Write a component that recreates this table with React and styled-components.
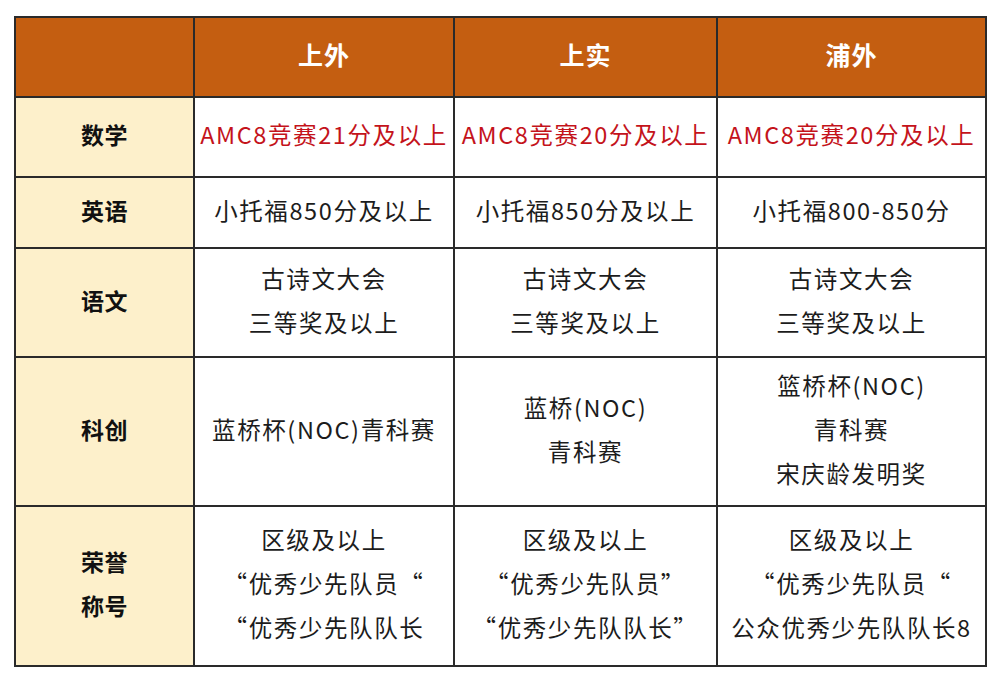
import React from 'react';
import styled, { createGlobalStyle } from 'styled-components';

const GlobalStyle = createGlobalStyle`
  html, body {
    margin: 0;
    padding: 0;
    background: #ffffff;
  }
  body {
    font-family: "Noto Sans CJK SC", "Noto Sans", sans-serif;
  }
`;

const Page = styled.div`
  width: 998px;
  height: 680px;
  box-sizing: border-box;
  padding: 16px 0 0 14px;
`;

const Table = styled.table`
  border-collapse: collapse;
  table-layout: fixed;
  width: 971px;
  border: 2px solid #2a2a2a;
  td, th {
    border: 2px solid #2a2a2a;
    text-align: center;
    vertical-align: middle;
    padding: 0 0 6px 0;
  }
`;

const Col = styled.col`
  width: ${p => p.$w}px;
`;

const HeadCell = styled.th`
  background: #c45e11;
  color: #ffffff;
  font-size: 25px;
  font-weight: 700;
  letter-spacing: 1px;
  height: 72px;
`;

const Label = styled.td`
  background: #fdf0cb;
  color: #111;
  font-size: 23px;
  font-weight: 700;
  line-height: 44px;
  letter-spacing: 0.5px;
`;

const Cell = styled.td`
  color: ${p => (p.$red ? '#c4131b' : '#1c1c1c')};
  font-size: 23.5px;
  line-height: 44px;
  letter-spacing: 1.6px;
  white-space: nowrap;
`;

const Row = styled.tr`
  height: ${p => p.$h}px;
`;

const Line = styled.div``;

const schools = ['上外', '上实', '浦外'];
const widths = [179, 260, 263, 269];

const rows = [
  { label: ['数学'], h: 80, red: true, cells: [['AMC8竞赛21分及以上'], ['AMC8竞赛20分及以上'], ['AMC8竞赛20分及以上']] },
  { label: ['英语'], h: 71, cells: [['小托福850分及以上'], ['小托福850分及以上'], ['小托福800-850分']] },
  { label: ['语文'], h: 109, cells: [['古诗文大会', '三等奖及以上'], ['古诗文大会', '三等奖及以上'], ['古诗文大会', '三等奖及以上']] },
  { label: ['科创'], h: 149, cells: [['蓝桥杯(NOC)青科赛'], ['蓝桥(NOC)', '青科赛'], ['篮桥杯(NOC)', '青科赛', '宋庆龄发明奖']] },
  {
    label: ['荣誉', '称号'], h: 160, cells: [
      ['区级及以上', '“优秀少先队员“', '“优秀少先队队长'],
      ['区级及以上', '“优秀少先队员”', '“优秀少先队队长”'],
      ['区级及以上', '“优秀少先队员“', '公众优秀少先队队长8'],
    ],
  },
];

const Lines = ({ items }) => items.map((t, i) => <Line key={i}>{t}</Line>);

export default function App() {
  return (
    <Page>
      <GlobalStyle />
      <Table>
        <colgroup>
          {widths.map((w, i) => <Col key={i} $w={w} />)}
        </colgroup>
        <thead>
          <tr>
            <HeadCell />
            {schools.map(s => <HeadCell key={s}>{s}</HeadCell>)}
          </tr>
        </thead>
        <tbody>
          {rows.map(r => (
            <Row key={r.label[0]} $h={r.h}>
              <Label><Lines items={r.label} /></Label>
              {r.cells.map((c, i) => (
                <Cell key={i} $red={r.red}><Lines items={c} /></Cell>
              ))}
            </Row>
          ))}
        </tbody>
      </Table>
    </Page>
  );
}
